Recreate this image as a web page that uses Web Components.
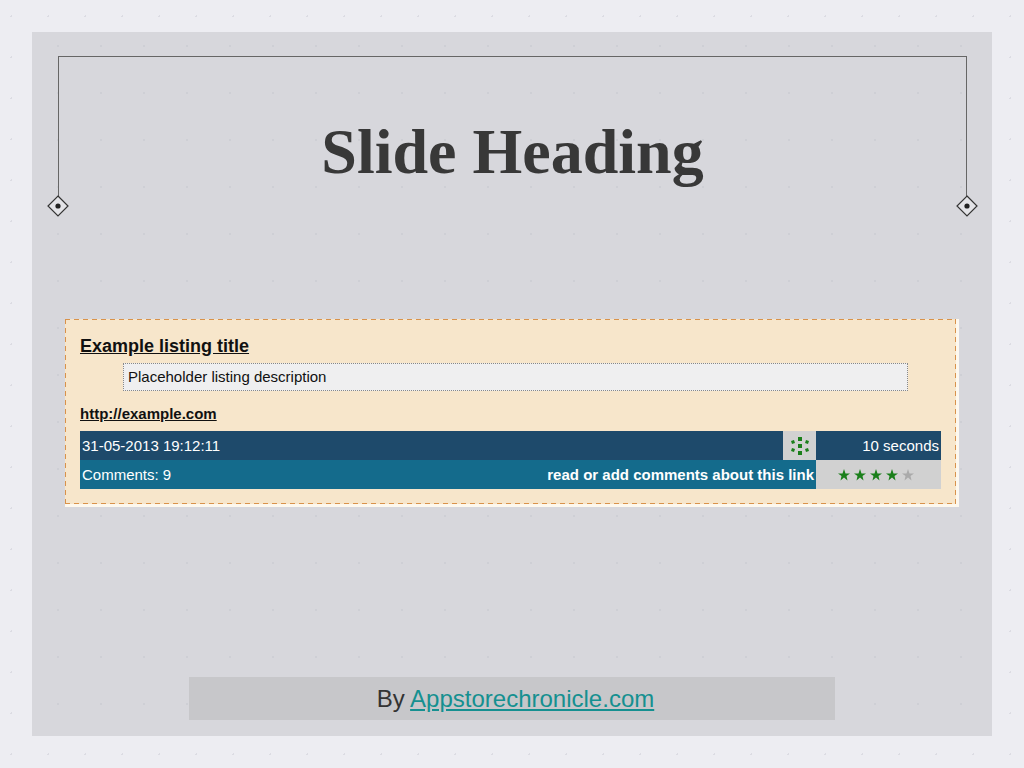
<!DOCTYPE html>
<html lang="en">
<head>
<meta charset="utf-8">
<title>Slide</title>
<style>
html,body{margin:0;min-height:100%}
body{background:#ededf2;font-family:"Liberation Sans",Arial,sans-serif;color:#333}
</style>
</head>
<body>
<slide-page>
  <slide-heading slot="heading">Slide Heading</slide-heading>
  <link-card></link-card>
  <slide-credit slot="credit"></slide-credit>
</slide-page>
<script>
const define = (name, html) => {
  const t = document.createElement('template');
  t.innerHTML = html;
  customElements.define(name, class extends HTMLElement {
    constructor() {
      super();
      this.attachShadow({mode: 'open'}).append(t.content.cloneNode(true));
    }
  });
};

define('corner-mark', `
<style>:host{display:block;width:22px;height:22px}svg{display:block}</style>
<svg width="22" height="22" viewBox="0 0 22 22" aria-hidden="true">
<path d="M11 1 21 11 11 21 1 11Z" fill="#e3e3e7" stroke="#333" stroke-width="1.2"/>
<circle cx="11" cy="11" r="2.6" fill="#222"/></svg>`);

define('slide-heading', `
<style>
:host{display:block;position:relative;height:148px;border:1px solid #666;border-bottom:0}
h1{margin:0;height:100%;padding-top:42px;box-sizing:border-box;display:flex;align-items:center;justify-content:center;
font:bold 64px "Liberation Serif",serif;color:#383838}
corner-mark{position:absolute;bottom:-12px}
.l{left:-12px}.r{right:-12px}
</style>
<h1><slot></slot></h1><corner-mark class="l"></corner-mark><corner-mark class="r"></corner-mark>`);

define('star-rating', `
<style>:host{display:flex;justify-content:center;gap:4px;padding-right:6px}svg{display:block;fill:#1a7f1a}svg:last-child{fill:#aaa}</style>
` + '<svg width="12" height="12" viewBox="0 0 24 24" aria-hidden="true"><path d="M12 0 15 9H24L17 14 19 23 12 17 5 23 7 14 0 9H9Z"/></svg>'.repeat(5));

define('link-card', `
<style>
:host{display:block;background:#fdf8ee;padding:0 3px 3px 0}
article{border:1px solid transparent;padding:15px 14px 14px;
background:
repeating-linear-gradient(90deg,#d9924a 0 5px,transparent 5px 9px) top/100% 1px no-repeat border-box,
repeating-linear-gradient(90deg,#d9924a 0 5px,transparent 5px 9px) bottom/100% 1px no-repeat border-box,
repeating-linear-gradient(#d9924a 0 5px,transparent 5px 9px) left/1px 100% no-repeat border-box,
repeating-linear-gradient(#d9924a 0 5px,transparent 5px 9px) right/1px 100% no-repeat border-box,
#f7e6cb;background-origin:border-box}
a{color:#111}
h2{margin:0;font-size:18px;line-height:22px}
p{margin:6px 33px 0 43px;border:1px dotted #888;background:#efeff0;padding:0 4px;font-size:15px;line-height:26px;color:#111}
.url{display:block;margin:13px 0 7px;font-size:15px;line-height:20px;font-weight:bold}
table{width:100%;border-collapse:collapse;table-layout:fixed;font-size:15px;color:#fff}
td{padding:0 2px;height:29px;line-height:28px;background:#1e4a6b}
tr+tr td{background:#146b8c}
td.icon,tr+tr td.stars{background:#d1d1d1}
.right{text-align:right}
td a{color:#fff;font-weight:bold;text-decoration:none}
td.icon{padding:0}
.icon svg{display:block;margin:auto}
</style>
<article>
<h2><a href="#">Example listing title</a></h2>
<p>Placeholder listing description</p>
<a class="url" href="#">http://example.com</a>
<table>
<colgroup><col style="width:200px"><col><col style="width:33px"><col style="width:125px"></colgroup>
<tr><td colspan="2">31-05-2013 19:12:11</td><td class="icon">
<svg width="20" height="20" viewBox="0 0 20 20" fill="#1a7f1a" aria-hidden="true">
<path d="M8 1h4v4H8zM8 15h4v4H8zM8 8h4v4H8zM1 5l3-1 1 3-3 1zM16 4l3 1-1 3-3-1zM2 12l3 1-1 3-3-1zM15 13l3-1 1 3-3 1z"/></svg>
</td><td class="right">10 seconds</td></tr>
<tr><td>Comments: 9</td><td class="right" colspan="2"><a href="#">read or add comments about this link</a></td>
<td class="stars"><star-rating role="img" aria-label="4 of 5 stars"></star-rating></td></tr>
</table>
</article>`);

define('slide-credit', `
<style>:host{display:block;background:#c7c7ca;text-align:center;font-size:24px;line-height:43px;padding:0 0 0 7px}
a{color:#159090}</style>
By <a href="#">Appstorechronicle.com</a>`);

define('slide-page', `
<style>
:host{display:block;min-height:100vh;box-sizing:border-box;padding:32px;
background:radial-gradient(circle at 30% 40%,#dcdce3 1px,transparent 1px) 0 0/37px 41px,#ededf2}
main{min-height:calc(100vh - 64px);box-sizing:border-box;padding:24px 25px 16px 26px;display:flex;flex-direction:column;
background:radial-gradient(circle at 60% 30%,#cecfd5 1px,transparent 1px) 0 0/43px 47px,#d7d7dc}
.body{padding:0 8px 0 7px;margin-top:114px}
.credit{margin:auto 132px 0 131px}
</style>
<main><slot name="heading"></slot><div class="body"><slot></slot></div><div class="credit"><slot name="credit"></slot></div></main>`);
</script>
</body>
</html>
